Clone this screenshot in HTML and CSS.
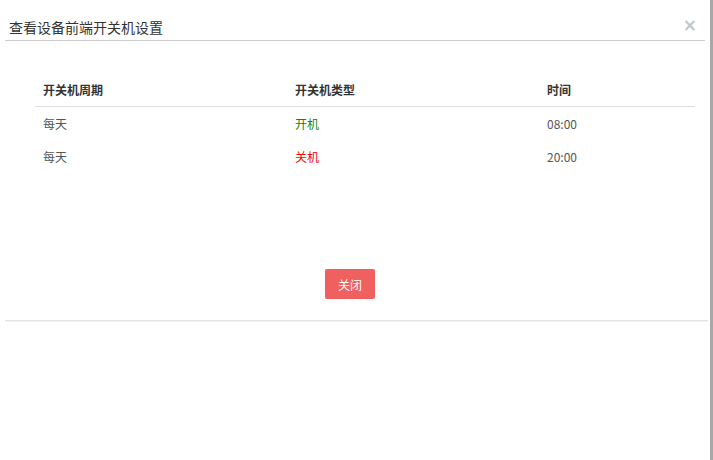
FILE: index.html
```html
<!DOCTYPE html>
<html lang="zh-CN">
<head>
<meta charset="utf-8">
<title>查看设备前端开关机设置</title>
<link rel="stylesheet" href="styles.css">
</head>
<body>
<div class="page">
  <div class="dialog">
    <div class="dialog-header">
      <span class="dialog-title">查看设备前端开关机设置</span>
      <span class="dialog-close">×</span>
    </div>
    <div class="dialog-body">
      <table class="grid">
        <thead>
          <tr><th class="c1">开关机周期</th><th class="c2">开关机类型</th><th class="c3">时间</th></tr>
        </thead>
        <tbody>
          <tr><td>每天</td><td class="on">开机</td><td>08:00</td></tr>
          <tr><td>每天</td><td class="off">关机</td><td>20:00</td></tr>
        </tbody>
      </table>
      <div class="actions"><button class="btn-close">关闭</button></div>
    </div>
    <div class="dialog-footer"></div>
  </div>
  <div class="edge"></div>
</div>
</body>
</html>
```
FILE: styles.css
```css
html, body { margin: 0; padding: 0; background: #fff; }
body { font-family: "Noto Sans CJK SC", "Noto Sans", sans-serif; color: #333; }
.page { display: flex; height: 460px; }
.dialog { flex: 1; display: flex; flex-direction: column; padding-left: 5px; padding-right: 2px; }
.dialog-header {
  height: 41px; border-bottom: 1px solid #ccc; display: flex; align-items: flex-end;
  justify-content: space-between; padding: 0 8px 0 4px; box-sizing: border-box; margin-right: 3px;
}
.dialog-title { font-size: 14px; line-height: 22px; padding-bottom: 2px; color: #333; }
.dialog-close { font-family: "DejaVu Sans", sans-serif; font-size: 17px; font-weight: bold; color: #c4c4c4; line-height: 22px; padding-bottom: 4px; }
.dialog-body { padding: 32px 10px 0 30px; }
.grid { border-collapse: collapse; width: 660px; font-size: 12px; }
.grid th, .grid td { text-align: left; padding: 8px; line-height: 17px; }
.grid th { font-weight: bold; border-bottom: 1px solid #ddd; color: #333; }
.grid td { color: #555; }
.c1 { width: 236px; }
.c2 { width: 236px; }
.grid td.on { color: #0a8a0a; }
.grid td.off { color: #f00; }
.actions { display: flex; justify-content: center; padding-top: 96px; padding-right: 33px; }
.btn-close {
  width: 50px; height: 30px; border: none; border-radius: 2px; background: #f0605e; color: #fff;
  font-family: "Noto Sans CJK SC", sans-serif; font-size: 12px; padding: 0;
}
.dialog-footer { margin-top: 21px; border-top: 1px solid #e4e4e4; box-shadow: 0 1px 1px #f0f0f0; }
.edge { width: 3px; background: #a8a8a8; }
```
